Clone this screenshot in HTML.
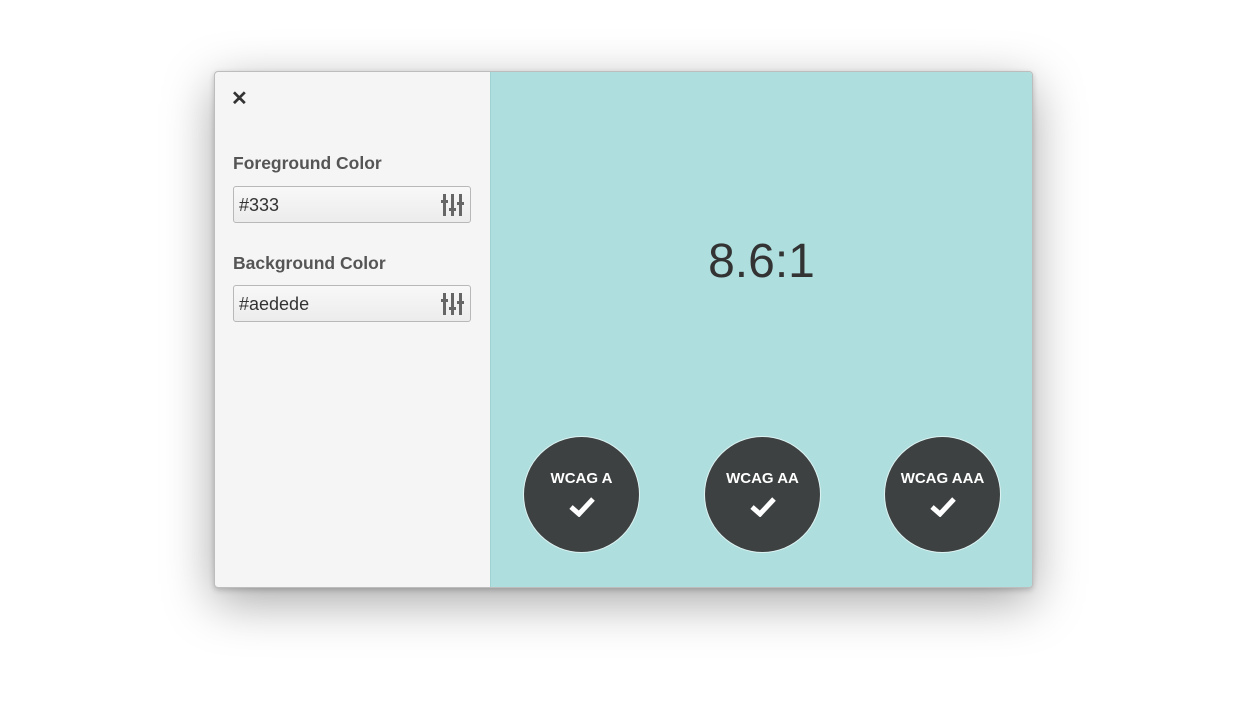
<!DOCTYPE html>
<html><head><style>
body{margin:0;width:1248px;height:702px;background:#fff;position:relative;overflow:hidden;font-family:"Liberation Sans",sans-serif}
.win{position:absolute;left:214px;top:71px;width:817px;height:515px;border:1px solid #bdbdbd;border-radius:4px;background:#f5f5f5;box-shadow:0 14px 50px rgba(0,0,0,.35),0 2px 6px rgba(0,0,0,.2);overflow:hidden}
.right{position:absolute;left:275px;top:0;right:0;bottom:0;background:#aedede;border-left:1px solid #9fd2d2}
.x{position:absolute;left:16px;top:14px;font-size:20px;font-weight:bold;color:#333}
.lbl{position:absolute;left:18px;font-size:17.5px;font-weight:bold;color:#555}
.inp{position:absolute;left:18px;width:238px;height:37px;border:1px solid #b8b8b8;border-radius:3px;background:linear-gradient(#f8f8f8,#ececec);box-sizing:border-box}
.inp span{position:absolute;left:5px;top:8px;font-size:18px;color:#333}
.inp svg{position:absolute;right:5px;top:7px}
.ratio{position:absolute;left:0;right:0;top:162px;text-align:center;font-size:48px;color:#333}
.c{position:absolute;top:365px;width:115px;height:115px;border-radius:50%;background:#3d4141;box-shadow:0 0 0 1px #dff3f3;color:#fff;text-align:center}
.c b{display:block;margin-top:33px;font-size:15px}
.c svg{margin-top:8px}
</style></head><body>
<div class="win">
<div class="x">✕</div>
<div class="lbl" style="top:81px">Foreground Color</div>
<div class="inp" style="top:114px"><span>#333</span>
<svg width="24" height="22" viewBox="0 0 24 22" fill="#666"><rect x="2" y="0" width="3" height="22"/><rect x="10" y="0" width="3" height="22"/><rect x="18" y="0" width="3" height="22"/><rect x="0" y="6" width="7" height="3"/><rect x="8" y="14" width="7" height="3"/><rect x="16" y="8" width="7" height="3"/></svg></div>
<div class="lbl" style="top:181px">Background Color</div>
<div class="inp" style="top:213px"><span>#aedede</span>
<svg width="24" height="22" viewBox="0 0 24 22" fill="#666"><rect x="2" y="0" width="3" height="22"/><rect x="10" y="0" width="3" height="22"/><rect x="18" y="0" width="3" height="22"/><rect x="0" y="6" width="7" height="3"/><rect x="8" y="14" width="7" height="3"/><rect x="16" y="8" width="7" height="3"/></svg></div>
<div class="right">
<div class="ratio">8.6:1</div>
<div class="c" style="left:33px"><b>WCAG A</b><svg width="26" height="22" viewBox="0 0 26 22"><path d="M2 12 L10 19 L24 4" stroke="#fff" stroke-width="5" fill="none"/></svg></div>
<div class="c" style="left:214px"><b>WCAG AA</b><svg width="26" height="22" viewBox="0 0 26 22"><path d="M2 12 L10 19 L24 4" stroke="#fff" stroke-width="5" fill="none"/></svg></div>
<div class="c" style="left:394px"><b>WCAG AAA</b><svg width="26" height="22" viewBox="0 0 26 22"><path d="M2 12 L10 19 L24 4" stroke="#fff" stroke-width="5" fill="none"/></svg></div>
</div>
</div>
</body></html>
